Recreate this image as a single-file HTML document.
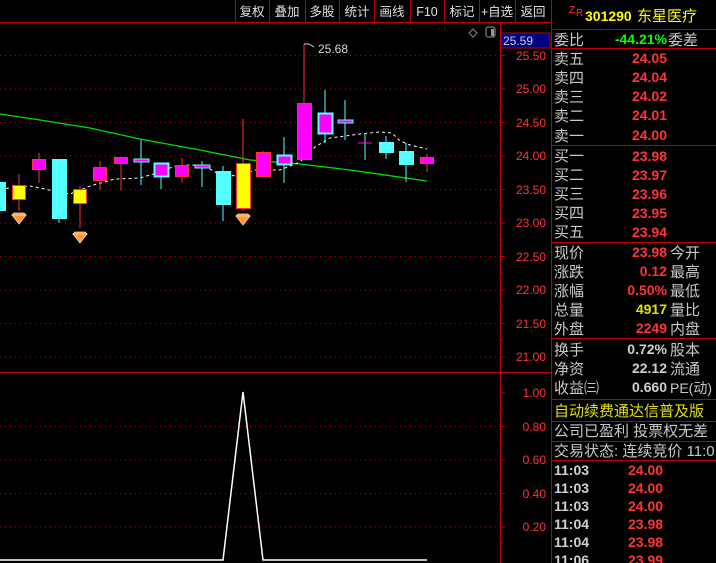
<!DOCTYPE html>
<html><head><meta charset="utf-8"><style>
body{margin:0;background:#000;width:716px;height:563px;overflow:hidden}
svg{display:block}
text{font-family:"Liberation Sans","Noto Sans CJK SC",sans-serif}
.lb{fill:#c8c8c8;font-size:15px}
.v{fill:#ff3434;font-size:14px;font-weight:bold;text-anchor:end}
.ax{fill:#ff3434;font-size:12px;text-anchor:end}
.bt{fill:#e0e0e0;font-size:12.5px;text-anchor:middle}
</style></head><body>
<svg width="716" height="563" viewBox="0 0 716 563" xmlns="http://www.w3.org/2000/svg">
<line x1="0" y1="22.5" x2="551" y2="22.5" stroke="#c00000"/>
<g stroke="#c00000">
<line x1="235.5" y1="0" x2="235.5" y2="22"/><line x1="269.5" y1="0" x2="269.5" y2="22"/><line x1="305.5" y1="0" x2="305.5" y2="22"/><line x1="339.5" y1="0" x2="339.5" y2="22"/><line x1="374.5" y1="0" x2="374.5" y2="22"/><line x1="410.5" y1="0" x2="410.5" y2="22"/><line x1="444.5" y1="0" x2="444.5" y2="22"/><line x1="479.5" y1="0" x2="479.5" y2="22"/><line x1="515.5" y1="0" x2="515.5" y2="22"/>
</g>
<g class="bt">
<text x="252" y="16">复权</text><text x="287" y="16">叠加</text><text x="322" y="16">多股</text><text x="357" y="16">统计</text><text x="392" y="16">画线</text><text x="427" y="16">F10</text><text x="462" y="16">标记</text><text x="497" y="16">+自选</text><text x="533" y="16">返回</text>
</g>
<line x1="500.5" y1="22" x2="500.5" y2="563" stroke="#c00000"/>
<line x1="0" y1="372.5" x2="551" y2="372.5" stroke="#c00000"/>
<rect x="501" y="33" width="49" height="15" fill="#000080" stroke="#c00000"/>
<text x="503" y="45" fill="#d0d0d0" font-size="12">25.59</text>
<path d="M473 29 L477 33 L473 37 L469 33 Z" fill="none" stroke="#888"/>
<rect x="486" y="27" width="9" height="10" rx="2" fill="none" stroke="#999"/><rect x="491" y="29" width="3" height="7" fill="#999"/>
<g stroke="#c00000" stroke-dasharray="1,4">
<line x1="0" y1="55.5" x2="500" y2="55.5"/><line x1="0" y1="89" x2="500" y2="89"/><line x1="0" y1="122.5" x2="500" y2="122.5"/><line x1="0" y1="156" x2="500" y2="156"/><line x1="0" y1="189.5" x2="500" y2="189.5"/><line x1="0" y1="223" x2="500" y2="223"/><line x1="0" y1="256.5" x2="500" y2="256.5"/><line x1="0" y1="290" x2="500" y2="290"/><line x1="0" y1="323.5" x2="500" y2="323.5"/><line x1="0" y1="357" x2="500" y2="357"/>
<line x1="0" y1="426.5" x2="500" y2="426.5"/><line x1="0" y1="460" x2="500" y2="460"/><line x1="0" y1="493.5" x2="500" y2="493.5"/><line x1="0" y1="527" x2="500" y2="527"/>
</g>
<g stroke="#c00000">
<line x1="500" y1="55.5" x2="505" y2="55.5"/><line x1="500" y1="72" x2="503" y2="72"/><line x1="500" y1="89" x2="505" y2="89"/><line x1="500" y1="106" x2="503" y2="106"/><line x1="500" y1="122.5" x2="505" y2="122.5"/><line x1="500" y1="139" x2="503" y2="139"/><line x1="500" y1="156" x2="505" y2="156"/><line x1="500" y1="173" x2="503" y2="173"/><line x1="500" y1="189.5" x2="505" y2="189.5"/><line x1="500" y1="206" x2="503" y2="206"/><line x1="500" y1="223" x2="505" y2="223"/><line x1="500" y1="240" x2="503" y2="240"/><line x1="500" y1="256.5" x2="505" y2="256.5"/><line x1="500" y1="273" x2="503" y2="273"/><line x1="500" y1="290" x2="505" y2="290"/><line x1="500" y1="306" x2="503" y2="306"/><line x1="500" y1="323.5" x2="505" y2="323.5"/><line x1="500" y1="340" x2="503" y2="340"/><line x1="500" y1="357" x2="505" y2="357"/>
<line x1="500" y1="393" x2="505" y2="393"/><line x1="500" y1="410" x2="503" y2="410"/><line x1="500" y1="426.5" x2="505" y2="426.5"/><line x1="500" y1="443" x2="503" y2="443"/><line x1="500" y1="460" x2="505" y2="460"/><line x1="500" y1="477" x2="503" y2="477"/><line x1="500" y1="493.5" x2="505" y2="493.5"/><line x1="500" y1="510" x2="503" y2="510"/><line x1="500" y1="527" x2="505" y2="527"/><line x1="500" y1="543" x2="503" y2="543"/>
</g>
<g class="ax">
<text x="546" y="60">25.50</text><text x="546" y="93">25.00</text><text x="546" y="127">24.50</text><text x="546" y="160">24.00</text><text x="546" y="194">23.50</text><text x="546" y="227">23.00</text><text x="546" y="261">22.50</text><text x="546" y="294">22.00</text><text x="546" y="328">21.50</text><text x="546" y="361">21.00</text>
<text x="546" y="397">1.00</text><text x="546" y="431">0.80</text><text x="546" y="464">0.60</text><text x="546" y="498">0.40</text><text x="546" y="531">0.20</text>
</g>
<polyline points="0,114 40,120 90,128 140,139 200,150 250,160 300,164 350,170 427,181" fill="none" stroke="#00e000" stroke-width="1.3"/>
<polyline points="0,189 30,186 45,189 60,193 70,194 90,186 115,179 140,178 160,172 175,166 190,165 205,166 220,175 240,176 255,170 280,170 300,162 315,147 330,138 360,134 380,132 392,133 400,141 410,145 427,149" fill="none" stroke="#fff" stroke-dasharray="3,3"/>
<g stroke-width="1">
<rect x="0" y="182" width="6" height="29" fill="#54ffff"/>
<line x1="19" y1="174" x2="19" y2="211" stroke="#ff3434"/><rect x="12.5" y="185.5" width="13" height="14" fill="#ffff00" stroke="#ff3434"/>
<line x1="39" y1="153" x2="39" y2="183" stroke="#ff3434"/><rect x="32.5" y="159.5" width="13" height="10" fill="#ff00ff" stroke="#ff3434"/>
<line x1="59" y1="159" x2="59" y2="223" stroke="#54ffff"/><rect x="52" y="159" width="15" height="60" fill="#54ffff"/>
<line x1="80" y1="186" x2="80" y2="228" stroke="#ff3434"/><rect x="73.5" y="189.5" width="13" height="14" fill="#ffff00" stroke="#ff3434"/>
<line x1="100" y1="161" x2="100" y2="190" stroke="#ff3434"/><rect x="93.5" y="167.5" width="13" height="13" fill="#ff00ff" stroke="#ff3434"/>
<line x1="121" y1="157" x2="121" y2="190" stroke="#ff3434"/><rect x="114.5" y="157.5" width="13" height="6" fill="#ff00ff" stroke="#ff3434"/>
<line x1="141" y1="140" x2="141" y2="185" stroke="#54ffff"/><rect x="134" y="159" width="15" height="3" fill="#ff00ff" stroke="#54ffff"/>
<line x1="161" y1="163" x2="161" y2="189" stroke="#54ffff"/><rect x="154.5" y="163.5" width="14" height="13" fill="#ff00ff" stroke="#54ffff" stroke-width="2"/>
<line x1="182" y1="158" x2="182" y2="183" stroke="#ff3434"/><rect x="175.5" y="165.5" width="13" height="11" fill="#ff00ff" stroke="#ff3434"/>
<line x1="202" y1="161" x2="202" y2="187" stroke="#54ffff"/><rect x="195" y="165" width="15" height="3" fill="#ff00ff" stroke="#54ffff"/>
<line x1="223" y1="166" x2="223" y2="221" stroke="#54ffff"/><rect x="216" y="171" width="15" height="34" fill="#54ffff"/>
<line x1="243" y1="119" x2="243" y2="211" stroke="#ff3434"/><rect x="236.5" y="163.5" width="14" height="45" fill="#ffff00" stroke="#ff3434"/>
<line x1="263" y1="151" x2="263" y2="177" stroke="#ff3434"/><rect x="256.5" y="152.5" width="14" height="24" fill="#ff00ff" stroke="#ff3434"/>
<line x1="284" y1="137" x2="284" y2="183" stroke="#54ffff"/><rect x="277.5" y="155.5" width="14" height="9" fill="#ff00ff" stroke="#54ffff" stroke-width="2"/>
<line x1="304" y1="44" x2="304" y2="160" stroke="#ff3434"/><rect x="297.5" y="103.5" width="14" height="56" fill="#ff00ff" stroke="#ff3434"/>
<line x1="325" y1="90" x2="325" y2="143" stroke="#54ffff"/><rect x="318.5" y="113.5" width="14" height="20" fill="#ff00ff" stroke="#54ffff" stroke-width="2"/>
<line x1="345" y1="100" x2="345" y2="140" stroke="#54ffff"/><rect x="338" y="120" width="15" height="3" fill="#ff00ff" stroke="#54ffff"/>
<line x1="365" y1="133" x2="365" y2="160" stroke="#54ffff"/><line x1="358" y1="143" x2="372" y2="143" stroke="#ff00ff"/>
<line x1="386" y1="136" x2="386" y2="159" stroke="#54ffff"/><rect x="379" y="142" width="15" height="11" fill="#54ffff"/>
<line x1="406" y1="143" x2="406" y2="182" stroke="#54ffff"/><rect x="399" y="151" width="15" height="14" fill="#54ffff"/>
<line x1="427" y1="154" x2="427" y2="172" stroke="#ff3434"/><rect x="420.5" y="157.5" width="13" height="6" fill="#ff00ff" stroke="#ff3434"/>
</g>
<line x1="304" y1="44" x2="309" y2="44" stroke="#ddd"/><line x1="309" y1="44" x2="314" y2="47" stroke="#ddd"/>
<text x="318" y="53" fill="#d8d8d8" font-size="12">25.68</text>
<g fill="#ff9a3c" stroke="#ffd9a0" stroke-width="0.8">
<path d="M12 215 L26 215 L19 224 Z M14 213 L24 213 L26 215 L12 215 Z"/>
<path d="M73 234 L87 234 L80 243 Z M75 232 L85 232 L87 234 L73 234 Z"/>
<path d="M236 216 L250 216 L243 225 Z M238 214 L248 214 L250 216 L236 216 Z"/>
</g>
<polyline points="0,560 223,560 243,392 263,560 427,560" fill="none" stroke="#fff" stroke-width="1.5"/>
<line x1="551.5" y1="0" x2="551.5" y2="563" stroke="#c00000"/>
<g stroke="#c00000">
<line x1="551" y1="29.5" x2="716" y2="29.5"/><line x1="551" y1="48.5" x2="716" y2="48.5"/><line x1="551" y1="145.5" x2="716" y2="145.5"/><line x1="551" y1="242.5" x2="716" y2="242.5"/><line x1="551" y1="338.5" x2="716" y2="338.5"/><line x1="551" y1="399.5" x2="716" y2="399.5"/><line x1="551" y1="421.5" x2="716" y2="421.5"/><line x1="551" y1="441.5" x2="716" y2="441.5"/><line x1="551" y1="460.5" x2="716" y2="460.5"/>
</g>
<text x="569" y="13" fill="#ff3434" font-size="10">Z</text><text x="576" y="16" fill="#ff3434" font-size="10">R</text>
<text x="585" y="21" fill="#ffff00" font-size="14" font-weight="bold">301290</text>
<text x="637" y="21" fill="#ffff00" font-size="15">东星医疗</text>
<text x="554" y="45" class="lb">委比</text><text x="667" y="44" class="v" style="fill:#00ff00">-44.21%</text><text x="668" y="45" class="lb">委差</text>
<g>
<text x="554" y="64" class="lb">卖五</text><text x="667" y="63" class="v">24.05</text>
<text x="554" y="83" class="lb">卖四</text><text x="667" y="82" class="v">24.04</text>
<text x="554" y="102" class="lb">卖三</text><text x="667" y="101" class="v">24.02</text>
<text x="554" y="121" class="lb">卖二</text><text x="667" y="120" class="v">24.01</text>
<text x="554" y="141" class="lb">卖一</text><text x="667" y="140" class="v">24.00</text>
<text x="554" y="161" class="lb">买一</text><text x="667" y="161" class="v">23.98</text>
<text x="554" y="180" class="lb">买二</text><text x="667" y="180" class="v">23.97</text>
<text x="554" y="199" class="lb">买三</text><text x="667" y="199" class="v">23.96</text>
<text x="554" y="218" class="lb">买四</text><text x="667" y="218" class="v">23.95</text>
<text x="554" y="237" class="lb">买五</text><text x="667" y="237" class="v">23.94</text>
<text x="554" y="258" class="lb">现价</text><text x="667" y="257" class="v">23.98</text><text x="670" y="258" class="lb">今开</text>
<text x="554" y="277" class="lb">涨跌</text><text x="667" y="276" class="v">0.12</text><text x="670" y="277" class="lb">最高</text>
<text x="554" y="296" class="lb">涨幅</text><text x="667" y="295" class="v">0.50%</text><text x="670" y="296" class="lb">最低</text>
<text x="554" y="315" class="lb">总量</text><text x="667" y="314" class="v" style="fill:#e0e000">4917</text><text x="670" y="315" class="lb">量比</text>
<text x="554" y="334" class="lb">外盘</text><text x="667" y="333" class="v">2249</text><text x="670" y="334" class="lb">内盘</text>
<text x="554" y="355" class="lb">换手</text><text x="667" y="354" class="v" style="fill:#d0d0d0">0.72%</text><text x="670" y="355" class="lb">股本</text>
<text x="554" y="374" class="lb">净资</text><text x="667" y="373" class="v" style="fill:#d0d0d0">22.12</text><text x="670" y="374" class="lb">流通</text>
<text x="554" y="393" class="lb">收益㈢</text><text x="667" y="392" class="v" style="fill:#d0d0d0">0.660</text><text x="670" y="393" class="lb" style="font-size:14px">PE(动)</text>
<text x="554" y="416" fill="#e0e000" font-size="15">自动续费通达信普及版</text>
<text x="554" y="436" class="lb">公司已盈利 投票权无差</text>
<text x="554" y="456" class="lb">交易状态: 连续竞价 11:0</text>
<g font-size="14" font-weight="bold">
<text x="554" y="475" fill="#d0d0d0">11:03</text><text x="628" y="475" fill="#ff3434">24.00</text>
<text x="554" y="493" fill="#d0d0d0">11:03</text><text x="628" y="493" fill="#ff3434">24.00</text>
<text x="554" y="511" fill="#d0d0d0">11:03</text><text x="628" y="511" fill="#ff3434">24.00</text>
<text x="554" y="529" fill="#d0d0d0">11:04</text><text x="628" y="529" fill="#ff3434">23.98</text>
<text x="554" y="547" fill="#d0d0d0">11:04</text><text x="628" y="547" fill="#ff3434">23.98</text>
<text x="554" y="565" fill="#d0d0d0">11:06</text><text x="628" y="565" fill="#ff3434">23.99</text>
</g>
</g>
</svg>
</body></html>
